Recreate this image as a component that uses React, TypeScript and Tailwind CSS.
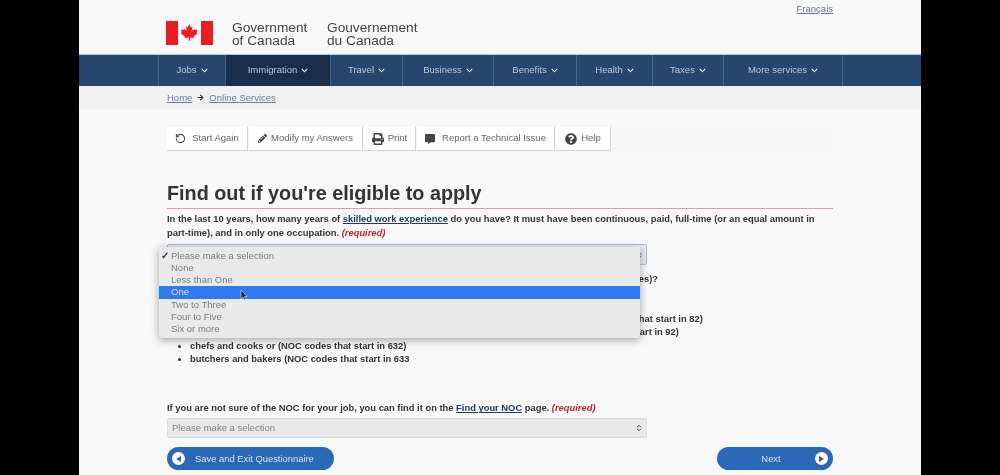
import { ChevronsUpDown, RotateCw } from 'lucide-react';
import { FaArrowRight, FaChevronDown, FaCommentAlt, FaPencilAlt, FaPrint, FaQuestionCircle } from 'react-icons/fa';

const navItems = [
    { label: 'Jobs', width: 'w-[67px]' },
    { label: 'Immigration', width: 'w-[105px]', active: true },
    { label: 'Travel', width: 'w-[72px]' },
    { label: 'Business', width: 'w-[91px]' },
    { label: 'Benefits', width: 'w-[83px]' },
    { label: 'Health', width: 'w-[76px]' },
    { label: 'Taxes', width: 'w-[71px]' },
    { label: 'More services', width: 'w-[119px]' },
];

const trades = [
    'industrial, electrical and construction trades (NOC codes that start in 72)',
    'maintenance and equipment operation trades (NOC codes that start in 73)',
    'supervisors and technical jobs in natural resources, agriculture and related production (NOC codes that start in 82)',
    'processing, manufacturing and utilities supervisors and central control operators (NOC codes that start in 92)',
    'chefs and cooks or (NOC codes that start in 632)',
    'butchers and bakers (NOC codes that start in 633',
];

const options = ['Please make a selection', 'None', 'Less than One', 'One', 'Two to Three', 'Four to Five', 'Six or more'];

const Required = () => <em className="text-[#b3262e] font-bold">(required)</em>;

const SelectBox = ({ focused }: { focused?: boolean }) => (
    <div className={`flex items-center justify-between pl-[4px] pr-[3px] w-[480px] rounded-[2px] bg-[#e9e9e9] text-[#858585] text-[9.5px] ${focused ? 'h-[21px] border border-[#a3c0e6]' : 'h-[20px] border border-[#dddddd]'}`}>
        <span>Please make a selection</span>
        <ChevronsUpDown size={8} strokeWidth={3} className="text-[#444]" />
    </div>
);

const ToolButton = ({ width, icon, label }: { width: string; icon: React.ReactNode; label: string }) => (
    <div className={`${width} h-[24px] flex items-center justify-center gap-[4px] bg-white border-b border-r border-[#d4d4d4] text-[9.5px] text-[#666] shrink-0`}>
        {icon}
        <span>{label}</span>
    </div>
);

export default function App() {
    return (
        <div className="w-[1000px] h-[475px] overflow-hidden bg-black px-[79px] font-['Liberation_Sans',Arial,sans-serif]">
            <div className="relative h-[475px] bg-[#f8f8f8] blur-[0.35px]">
                {/* header */}
                <div className="h-[54px] flex pl-[87px] pt-[21px] relative">
                    <svg width="47" height="24" viewBox="0 0 47 24" className="shrink-0">
                        <rect width="47" height="24" fill="#f8f8f8" />
                        <rect x="0" width="12" height="24" fill="#ea1c24" />
                        <rect x="35" width="12" height="24" fill="#ea1c24" />
                        <path fill="#ea1c24" d="M23.5 3l-2 3.4-1.6-.8.7 4.4-2.400-2.200-.5 1.300-2.800-.5.9 3-1.200.6 4.300 3.300-.5 1.600 4.200-.6V20h1.200v-3.500l4.200.6-.5-1.600 4.300-3.300-1.200-.6.9-3-2.800.5-.5-1.300-2.400 2.200.7-4.400-1.600.8z" />
                    </svg>
                    <div className="ml-[19px] w-[95px] text-[13.7px] leading-[13px] text-[#444]">Government<br />of Canada</div>
                    <div className="text-[13.7px] leading-[13px] text-[#444]">Gouvernement<br />du Canada</div>
                    <a className="ml-auto mr-[88px] -mt-[18px] text-[9.5px] leading-[12px] text-[#6b7488] underline">Français</a>
                </div>

                {/* nav */}
                <div className="h-[32px] flex pl-[79px] bg-[#27466f] border-t border-[#b9c8da]">
                    <div className="flex border-l border-[#47638a]">
                        {navItems.map((item) => (
                            <div key={item.label} className={`${item.width} flex items-center justify-center gap-[4px] border-r border-[#47638a] text-[9.5px] text-[#b9c6d8] ${item.active ? 'bg-[#192e4d]' : ''}`}>
                                <span>{item.label}</span>
                                <FaChevronDown size={7} className="text-white" />
                            </div>
                        ))}
                    </div>
                </div>

                {/* breadcrumb */}
                <div className="h-[24px] pl-[88px] pt-[5px] bg-[#f2f2f2] flex gap-[5px] items-start text-[9.5px] leading-[13px] text-[#6f7a96]">
                    <a className="underline">Home</a>
                    <FaArrowRight size={7} className="text-[#333] mt-[3px]" />
                    <a className="underline">Online Services</a>
                </div>

                <div className="ml-[88px] w-[666px]">
                    {/* toolbar */}
                    <div className="mt-[17px] flex bg-[#f7f7f7] rounded-[4px] gap-[1px]">
                        <ToolButton width="w-[81px]" icon={<RotateCw size={11} strokeWidth={2.2} className="text-[#444] -scale-x-100 mr-[2px]" />} label="Start Again" />
                        <ToolButton width="w-[114px]" icon={<FaPencilAlt size={9} className="text-[#444]" />} label="Modify my Answers" />
                        <ToolButton width="w-[52px]" icon={<FaPrint size={12} className="text-[#444]" />} label="Print" />
                        <ToolButton width="w-[138px]" icon={<FaCommentAlt size={10} className="text-[#444] mr-[3px]" />} label="Report a Technical Issue" />
                        <ToolButton width="w-[55px]" icon={<FaQuestionCircle size={12} className="text-[#444]" />} label="Help" />
                    </div>

                    <h1 className="mt-[28px] h-[30px] text-[19.8px] leading-[28px] font-bold text-[#333] border-b border-[#dba0a0]">Find out if you're eligible to apply</h1>

                    <p className="mt-[3px] text-[9.37px] leading-[14px] font-bold text-[#333]">
                        In the last 10 years, how many years of <a className="underline text-[#24395c]">skilled work experience</a> do you have? It must have been continuous, paid, full-time (or an equal amount in part-time), and in only one occupation. <Required />
                    </p>
                    <div className="mt-[4px]"><SelectBox focused /></div>

                    <p className="mt-[7.500px] text-[9.37px] leading-[13.500px] font-bold text-[#333]">Which of these skilled trades is your work experience in (National Occupational Classification or NOC codes)?</p>
                    <ul className="text-[9.37px] leading-[13.4px] font-bold text-[#333] list-disc pl-[23px]">
                        {trades.map((t) => <li key={t}>{t}</li>)}
                    </ul>

                    <p className="mt-[35px] text-[9.37px] leading-[14px] font-bold text-[#333]">
                        If you are not sure of the NOC for your job, you can find it on the <a className="underline text-[#24395c]">Find your NOC</a> page. <Required />
                    </p>
                    <div className="mt-[3px]"><SelectBox /></div>

                    <div className="mt-[9px] flex justify-between">
                        <div className="w-[167px] h-[23px] rounded-full bg-[#2a68b8] flex items-center pl-[5px] text-[9.4px] text-[#d6e3f5]">
                            <span className="w-[13px] h-[13px] rounded-full bg-white flex items-center justify-center">
                                <span className="w-0 h-0 border-y-[3px] border-y-transparent border-r-[5px] border-r-[#2a68b8]" />
                            </span>
                            <span className="ml-[10px]">Save and Exit Questionnaire</span>
                        </div>
                        <div className="w-[116px] h-[23px] rounded-full bg-[#2a68b8] flex items-center pr-[5px] text-[9.4px] text-[#d6e3f5]">
                            <span className="flex-1 text-center pl-[10px]">Next</span>
                            <span className="w-[13px] h-[13px] rounded-full bg-white flex items-center justify-center">
                                <span className="w-0 h-0 border-y-[3px] border-y-transparent border-l-[5px] border-l-[#555]" />
                            </span>
                        </div>
                    </div>
                </div>

                {/* open dropdown */}
                <div className="absolute left-[80px] top-[247px] w-[481px] h-[91px] bg-[#e9e9e9] rounded-b-[3px] shadow-[0_2px_8px_rgba(0,0,0,0.35)] pt-[2.500px] text-[9.5px] text-[#7d7d7d]">
                    {options.map((o, i) => (
                        <div key={o} className={`h-[12.3px] leading-[12.3px] pl-[12px] relative ${o === 'One' ? 'bg-[#2f7af0] text-[#cfe0fa]' : ''}`}>
                            {i === 0 && <span className="absolute left-[2px] font-bold text-[#333]">✓</span>}
                            {o}
                        </div>
                    ))}
                </div>

                {/* mouse cursor */}
                <svg width="8" height="11" viewBox="0 0 8 11" className="absolute left-[161px] top-[290px]">
                    <path d="M1 0v9l2-2 1.4 3 1.4-.6L4.4 6.500H7z" fill="#222" stroke="#fff" strokeWidth="0.5" />
                </svg>
            </div>
        </div>
    );
}
